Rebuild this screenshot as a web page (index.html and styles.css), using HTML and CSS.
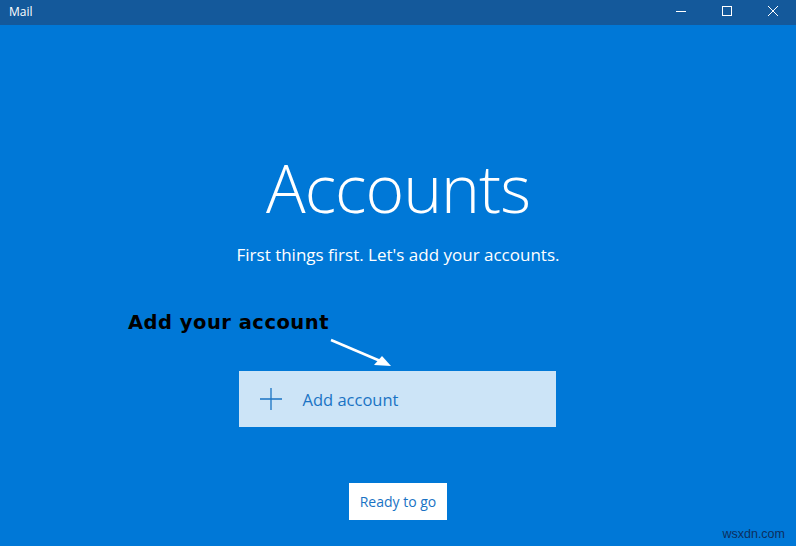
FILE: index.html
```html
<!DOCTYPE html>
<html lang="en">
<head>
    <meta charset="UTF-8">
    <title>Mail</title>
    <link rel="stylesheet" href="styles.css">
</head>
<body>
    <div class="window">
        <div class="titlebar">
            <span class="app-name">Mail</span>
            <div class="controls">
                <span class="ctrl">
                    <svg width="12" height="12" viewBox="0 0 12 12"><path d="M1 6.5h10" stroke="#fff" stroke-width="1"/></svg>
                </span>
                <span class="ctrl">
                    <svg width="12" height="12" viewBox="0 0 12 12"><rect x="1.5" y="1.5" width="9" height="9" fill="none" stroke="#fff" stroke-width="1"/></svg>
                </span>
                <span class="ctrl">
                    <svg width="12" height="12" viewBox="0 0 12 12"><path d="M1 1l10 10M11 1L1 11" stroke="#fff" stroke-width="1"/></svg>
                </span>
            </div>
        </div>

        <div class="content">
            <h1>Accounts</h1>
            <p class="subtitle">First things first. Let's add your accounts.</p>

            <div class="annotation">
                <span class="note">Add your account</span>
                <svg class="arrow" width="70" height="34" viewBox="0 0 70 34">
                    <path d="M2 2L56 25" stroke="#fff" stroke-width="2.5"/>
                    <path d="M62 28L45 27L53 18Z" fill="#fff"/>
                </svg>
            </div>

            <button class="add-account">
                <svg width="24" height="24" viewBox="0 0 24 24"><path d="M12 1v22M1 12h22" stroke="#1a73c4" stroke-width="1.3"/></svg>
                <span>Add account</span>
            </button>

            <button class="ready">Ready to go</button>
        </div>

        <span class="watermark">wsxdn.com</span>
    </div>
</body>
</html>
```

FILE: styles.css
```css
body {
    margin: 0;
    padding: 0;
    font-family: 'Open Sans', 'Segoe UI', sans-serif;
}

.window {
    position: relative;
    width: 796px;
    height: 546px;
    background: #0078d7;
    overflow: hidden;
}

.titlebar {
    height: 25px;
    background: #14599b;
    display: flex;
    justify-content: space-between;
    align-items: center;
    color: #fff;
}

.app-name {
    font-size: 12px;
    padding-left: 9px;
    padding-bottom: 3px;
}

.controls {
    display: flex;
    height: 100%;
}

.ctrl {
    width: 46px;
    display: flex;
    align-items: center;
    justify-content: center;
    padding-bottom: 3px;
}

.content {
    display: flex;
    flex-direction: column;
    align-items: center;
    color: #fff;
}

h1 {
    font-weight: 300;
    font-size: 66px;
    margin: 117px 0 0 0;
    line-height: 90px;
    letter-spacing: -1px;
}

.subtitle {
    font-size: 17px;
    margin: 11px 0 0 0;
    line-height: 24px;
}

.annotation {
    position: relative;
    width: 796px;
    height: 94px;
}

.note {
    position: absolute;
    left: 128px;
    top: 44px;
    font-family: 'DejaVu Sans', sans-serif;
    font-weight: bold;
    font-size: 19.5px;
    color: #000;
    letter-spacing: 0.5px;
}

.arrow {
    position: absolute;
    left: 329px;
    top: 71px;
}

.add-account {
    width: 317px;
    height: 56px;
    margin: 10px 2px 0 0;
    background: #cce4f7;
    border: none;
    display: flex;
    align-items: center;
    padding: 0 0 0 20px;
    gap: 20px;
    font-family: 'Open Sans', sans-serif;
    font-size: 16.5px;
    color: #1a73c4;
    cursor: pointer;
}

.ready {
    margin-top: 56px;
    width: 98px;
    height: 37px;
    background: #fff;
    border: none;
    font-family: 'Open Sans', sans-serif;
    font-size: 14px;
    color: #1a73c4;
    padding: 0;
}

.watermark {
    position: absolute;
    right: 11px;
    bottom: 5px;
    font-family: 'Liberation Sans', Arial, sans-serif;
    font-size: 12.5px;
    color: #0d2f5e;
}
```
